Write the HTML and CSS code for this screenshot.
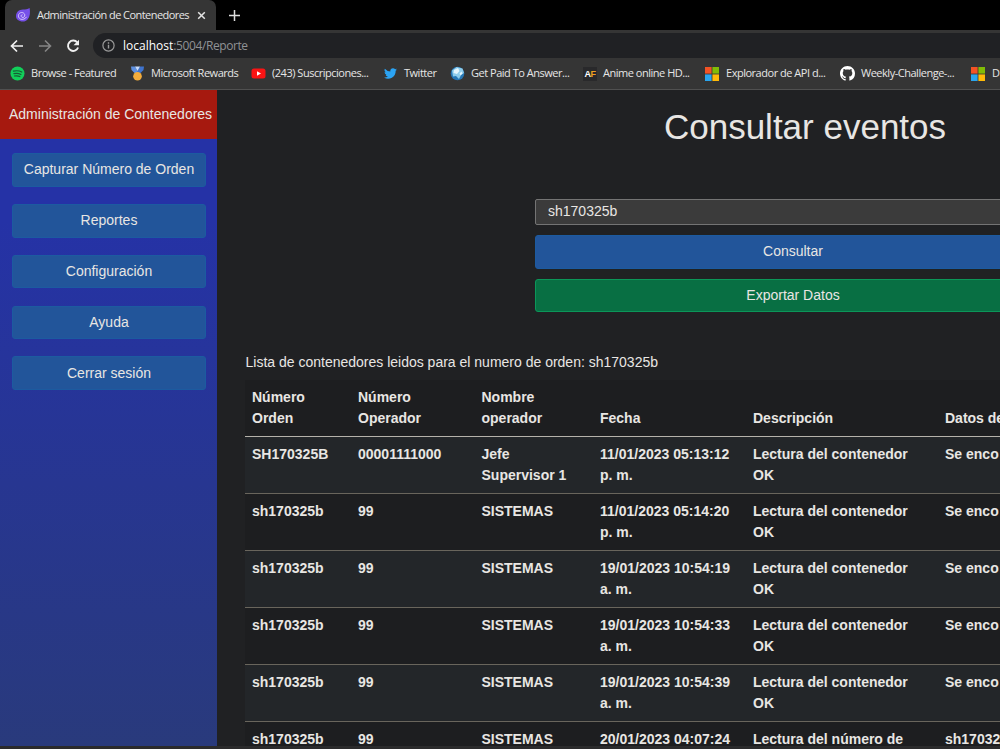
FILE: index.html
```html
<!DOCTYPE html>
<html lang="es">
<head>
    <meta charset="UTF-8">
    <meta name="viewport" content="width=device-width, initial-scale=1.0">
    <title>Administración de Contenedores</title>
    <link rel="stylesheet" href="styles.css">
</head>
<body>
    <div class="browser">
        <div class="tabs">
            <div class="tab">
                <svg class="tab__icon" width="16" height="16" viewBox="0 0 16 16">
                    <path d="M1 9.500C1 5 4 2.800 8 2.600c2.600 0 4.500-.6 6.600-1.700C15.400 5 15 9.500 12.800 12.200 10.800 14.700 7.500 15 5 14 2.500 13.200 1 11.700 1 9.500z" fill="#7650e8"/>
                    <path d="M11.500 9.800c-1 2.200-4 3.200-6.100 2.200C3 10.600 2.800 7.600 4.700 6.200 6.600 4.800 9.500 5.700 9.800 8c.2 2-1.700 3-3 2.200-1.300-.9-.6-2.600.7-2.400" fill="none" stroke="#d9c9ff" stroke-width="1"/>
                </svg>
                <span class="tab__title">Administración de Contenedores</span>
                <svg class="tab__close" width="9" height="9" viewBox="0 0 9 9"><path d="M1.200 1.200l6.600 6.600M7.800 1.200L1.200 7.800" stroke="#e4e4e4" stroke-width="1.500"/></svg>
            </div>
            <svg class="tabs__new" width="11" height="11" viewBox="0 0 11 11"><path d="M5.500 0v11M0 5.500h11" stroke="#dedede" stroke-width="1.500"/></svg>
        </div>

        <div class="toolbar">
            <svg width="14" height="14" viewBox="0 0 14 14"><path d="M13 7H2M7 1.500L1.500 7 7 12.500" fill="none" stroke="#f0f0f0" stroke-width="1.700"/></svg>
            <svg width="14" height="14" viewBox="0 0 14 14"><path d="M1 7h11M7 1.500L12.500 7 7 12.500" fill="none" stroke="#858585" stroke-width="1.600"/></svg>
            <svg width="14" height="14" viewBox="0 0 14 14"><path d="M11.300 3.500A5.200 5.200 0 1 0 12.100 8.500" fill="none" stroke="#f0f0f0" stroke-width="1.900"/><path d="M13 .8v5.500H7.500z" fill="#f0f0f0"/></svg>
            <div class="address">
                <svg width="13" height="13" viewBox="0 0 13 13"><circle cx="6.500" cy="6.500" r="5.600" fill="none" stroke="#9a9a9a" stroke-width="1.200"/><path d="M6.500 5.800v3.700M6.500 3.300v1.400" stroke="#9a9a9a" stroke-width="1.400"/></svg>
                <span class="address__url"><b>localhost</b>:5004/Reporte</span>
            </div>
        </div>

        <div class="bookmarks">
            <div class="bookmark bookmark--spotify">
                <svg width="15" height="15" viewBox="0 0 15 15"><circle cx="7.500" cy="7.500" r="7" fill="#12cf5a"/><path d="M3.400 5.200c3-.8 6-.5 8.400.8M3.900 7.700c2.500-.6 4.900-.4 7 .8M4.400 10c2-.4 3.800-.3 5.400.6" fill="none" stroke="#175c35" stroke-width="1.200" stroke-linecap="round"/></svg>
                <span>Browse - Featured</span>
            </div>
            <div class="bookmark bookmark--rewards">
                <svg width="15" height="15" viewBox="0 0 15 15"><path d="M1 .5h4l3.500 6-3 1.500L1.500 4z" fill="#5d8fe0"/><path d="M14 .5h-4L6.500 6.500l3 1.500 4-4z" fill="#3f74cf"/><path d="M5 .5h5L7.500 5z" fill="#c6dcff"/><circle cx="7.500" cy="10.200" r="4.300" fill="#f3ac3c"/></svg>
                <span>Microsoft Rewards</span>
            </div>
            <div class="bookmark bookmark--youtube">
                <svg width="15" height="15" viewBox="0 0 15 15"><rect x=".5" y="2.500" width="14" height="10" rx="2.500" fill="#fa1414"/><path d="M6 5.300v4.400l4-2.200z" fill="#fff"/></svg>
                <span>(243) Suscripciones...</span>
            </div>
            <div class="bookmark bookmark--twitter">
                <svg width="13" height="13" viewBox="0 0 24 24"><path d="M23.900 4.600a10 10 0 0 1-2.800.8 5 5 0 0 0 2.200-2.700c-1 .6-2 1-3.100 1.200a4.900 4.900 0 0 0-8.400 4.500A14 14 0 0 1 1.700 3.200a4.900 4.900 0 0 0 1.500 6.500c-.8 0-1.600-.2-2.200-.6a4.900 4.900 0 0 0 3.900 4.900c-.7.200-1.500.2-2.200.1a4.900 4.900 0 0 0 4.600 3.400A9.900 9.900 0 0 1 0 19.500a14 14 0 0 0 21.500-12.400c1-.7 1.800-1.600 2.400-2.500z" fill="#2ba3f3"/></svg>
                <span>Twitter</span>
            </div>
            <div class="bookmark bookmark--answer">
                <svg width="15" height="15" viewBox="0 0 15 15"><circle cx="7.500" cy="7.500" r="6.800" fill="#2777b5"/><path d="M2 4.500L6.500 1l6 1.500L14 7l-3 2-2 4-3-3-3 .5z" fill="#8ecdec"/><path d="M4 4l4-2 1.500 3L7 8 3.500 7zM9.500 7.500l2-2 1 2-2 2z" fill="#e4f5fc"/></svg>
                <span>Get Paid To Answer...</span>
            </div>
            <div class="bookmark bookmark--anime">
                <div class="af">A<i>F</i></div>
                <span>Anime online HD...</span>
            </div>
            <div class="bookmark bookmark--api">
                <svg width="14" height="14" viewBox="0 0 14 14"><path d="M0 0h6.600v6.600H0z" fill="#f35325"/><path d="M7.400 0H14v6.600H7.400z" fill="#81bc06"/><path d="M0 7.400h6.600V14H0z" fill="#2aa5ee"/><path d="M7.400 7.400H14V14H7.400z" fill="#ffba08"/></svg>
                <span>Explorador de API d...</span>
            </div>
            <div class="bookmark bookmark--github">
                <svg width="15" height="15" viewBox="0 0 16 16"><path fill="#fff" d="M8 0C3.580 0 0 3.580 0 8c0 3.540 2.290 6.530 5.470 7.590.4.070.55-.17.55-.38 0-.19-.01-.82-.01-1.490-2.010.37-2.530-.49-2.690-.94-.09-.23-.48-.94-.82-1.130-.28-.15-.68-.52-.01-.53.63-.01 1.080.58 1.230.82.72 1.210 1.870.87 2.330.66.07-.52.28-.87.51-1.070-1.780-.2-3.640-.89-3.640-3.950 0-.87.31-1.590.82-2.150-.08-.2-.36-1.020.08-2.120 0 0 .67-.21 2.200.82.64-.18 1.320-.27 2-.27s1.360.09 2 .27c1.530-1.040 2.200-.82 2.200-.82.44 1.100.16 1.920.08 2.120.51.560.82 1.270.82 2.150 0 3.070-1.870 3.750-3.650 3.950.29.25.54.73.54 1.480 0 1.070-.01 1.930-.01 2.200 0 .21.15.46.55.38A8.010 8.010 0 0 0 16 8c0-4.420-3.580-8-8-8z"/></svg>
                <span>Weekly-Challenge-...</span>
            </div>
            <div class="bookmark bookmark--docs">
                <svg width="14" height="14" viewBox="0 0 14 14"><path d="M0 0h6.600v6.600H0z" fill="#f35325"/><path d="M7.400 0H14v6.600H7.400z" fill="#81bc06"/><path d="M0 7.400h6.600V14H0z" fill="#2aa5ee"/><path d="M7.400 7.400H14V14H7.400z" fill="#ffba08"/></svg>
                <span>D</span>
            </div>
        </div>
    </div>

    <div class="page">
        <nav class="sidebar">
            <div class="sidebar__brand">Administración de Contenedores</div>
            <div class="sidebar__menu">
                <button class="btn btn--menu">Capturar Número de Orden</button>
                <button class="btn btn--menu">Reportes</button>
                <button class="btn btn--menu">Configuración</button>
                <button class="btn btn--menu">Ayuda</button>
                <button class="btn btn--menu">Cerrar sesión</button>
            </div>
        </nav>

        <main class="content">
            <h1>Consultar eventos</h1>
            <div class="form">
                <input class="form__input" type="text" value="sh170325b">
                <button class="btn btn--primary">Consultar</button>
                <button class="btn btn--success">Exportar Datos</button>
            </div>

            <p class="list-title">Lista de contenedores leidos para el numero de orden: sh170325b</p>
            <table class="table">
                <colgroup>
                    <col class="col-orden">
                    <col class="col-operador">
                    <col class="col-nombre">
                    <col class="col-fecha">
                    <col class="col-desc">
                    <col class="col-datos">
                </colgroup>
                <thead>
                    <tr><th>Número<br>Orden</th><th>Número<br>Operador</th><th>Nombre<br>operador</th><th>Fecha</th><th>Descripción</th><th>Datos de</th></tr>
                </thead>
                <tbody>
                    <tr><td>SH170325B</td><td>00001111000</td><td>Jefe<br>Supervisor 1</td><td>11/01/2023 05:13:12<br>p. m.</td><td>Lectura del contenedor<br>OK</td><td>Se enco</td></tr>
                    <tr><td>sh170325b</td><td>99</td><td>SISTEMAS</td><td>11/01/2023 05:14:20<br>p. m.</td><td>Lectura del contenedor<br>OK</td><td>Se enco</td></tr>
                    <tr><td>sh170325b</td><td>99</td><td>SISTEMAS</td><td>19/01/2023 10:54:19<br>a. m.</td><td>Lectura del contenedor<br>OK</td><td>Se enco</td></tr>
                    <tr><td>sh170325b</td><td>99</td><td>SISTEMAS</td><td>19/01/2023 10:54:33<br>a. m.</td><td>Lectura del contenedor<br>OK</td><td>Se enco</td></tr>
                    <tr><td>sh170325b</td><td>99</td><td>SISTEMAS</td><td>19/01/2023 10:54:39<br>a. m.</td><td>Lectura del contenedor<br>OK</td><td>Se enco</td></tr>
                    <tr><td>sh170325b</td><td>99</td><td>SISTEMAS</td><td>20/01/2023 04:07:24</td><td>Lectura del número de</td><td>sh17032</td></tr>
                </tbody>
            </table>
        </main>
    </div>
</body>
</html>
```
FILE: styles.css
```css
* {
    box-sizing: border-box;
}

body {
    margin: 0;
    height: 749px;
    overflow: hidden;
    display: flex;
    flex-direction: column;
    background-color: #202123;
    color: #e8e6e3;
    font-family: "Liberation Sans", Arial, sans-serif;
    font-size: 14px;
    line-height: 21px;
}

svg {
    display: block;
    flex: none;
}

/* barra del navegador */
.browser {
    flex: none;
    height: 90px;
    background-color: #353535;
    border-bottom: 1px solid #505050;
    font-family: "Open Sans", "Noto Sans", sans-serif;
    font-size: 11px;
    color: #e6e6e6;
    white-space: nowrap;
    overflow: hidden;
}

.tabs {
    display: flex;
    align-items: center;
    height: 30px;
    padding-left: 5px;
    background-color: #000;
}

.tab {
    display: flex;
    align-items: center;
    width: 211px;
    height: 30px;
    padding: 0 10px;
    background-color: #353535;
    border-radius: 7px 7px 0 0;
}

.tab__title {
    width: 153px;
    margin: 0 7px 0 6px;
    padding-bottom: 2px;
    letter-spacing: -0.55px;
}

.tabs__new {
    margin-left: 13px;
}

.toolbar {
    display: flex;
    align-items: center;
    gap: 14px;
    height: 31px;
    padding-left: 10px;
}

.address {
    flex: 1;
    display: flex;
    align-items: center;
    gap: 8px;
    height: 25px;
    margin-left: -1px;
    padding-left: 9px;
    border-radius: 13px 0 0 13px;
    background-color: #202124;
}

.address__url {
    font-size: 12px;
    letter-spacing: -0.4px;
    color: #909295;
}

.address__url b {
    font-weight: normal;
    letter-spacing: 0;
    color: #fff;
}

.bookmarks {
    display: flex;
    align-items: center;
    height: 25px;
    padding-left: 10px;
    letter-spacing: -0.48px;
}

.bookmark {
    display: flex;
    flex: none;
    align-items: center;
    gap: 6px;
}

.bookmark span {
    padding-bottom: 2px;
}

.bookmark--spotify {
    width: 120px;
}

.bookmark--rewards {
    width: 121px;
}

.bookmark--youtube {
    width: 133px;
}

.bookmark--twitter {
    width: 66px;
    gap: 7px;
}

.bookmark--answer {
    width: 133px;
}

.bookmark--anime {
    width: 122px;
}

.bookmark--api {
    width: 135px;
    gap: 7px;
}

.bookmark--github {
    width: 131px;
}

.bookmark--docs {
    gap: 7px;
}

.af {
    width: 14px;
    height: 14px;
    background-color: #29292b;
    color: #fff;
    font: bold 9px/14px "Liberation Sans", Arial, sans-serif;
    letter-spacing: -0.5px;
    text-align: center;
}

.af i {
    color: #f0a020;
    font-style: normal;
}

/* contenido */
.page {
    flex: 1;
    display: flex;
    min-height: 0;
    overflow: hidden;
    border-bottom: 3px solid #2b2b2c;
}

.sidebar {
    flex: none;
    width: 217px;
    background: linear-gradient(180deg, #2532a6 0%, #2532a6 20%, #293a7c 100%);
}

.sidebar__brand {
    height: 49px;
    padding-left: 9px;
    background-color: #a6190f;
    line-height: 49px;
    white-space: nowrap;
}

.sidebar__menu {
    display: flex;
    flex-direction: column;
    gap: 17.2px;
    padding: 14.2px 11px 0 12px;
}

.btn {
    display: block;
    width: 100%;
    height: 33.6px;
    padding: 0;
    border: 1px solid transparent;
    border-radius: 3px;
    color: #e8e6e3;
    font-family: inherit;
    font-size: 14px;
    line-height: 21px;
}

.btn--menu {
    background-color: #22559a;
    border-color: #1c5ba0;
}

.btn--primary {
    background-color: #22559a;
    border-color: #1c5ba0;
}

.btn--success {
    background-color: #086f43;
    border-color: #0b9659;
}

.form .btn {
    padding-bottom: 0.6px;
}

.content {
    flex: none;
    width: 1176px;
    padding: 16px 28px 0;
}

h1 {
    margin: 0;
    font-size: 35px;
    font-weight: normal;
    line-height: 42px;
    text-align: center;
}

.form {
    display: flex;
    flex-direction: column;
    gap: 10px;
    width: 516px;
    margin: 51px 0 0 290px;
}

.form__input {
    height: 26px;
    padding: 0 12px 2px;
    border: 1px solid #747474;
    border-radius: 2px;
    background-color: #3b3b3b;
    color: #e8e6e3;
    font-family: inherit;
    font-size: 14px;
}

.list-title {
    margin: 39.8px 0 7px;
    padding-left: 0.5px;
}

.table {
    width: 1120px;
    table-layout: fixed;
    border-collapse: collapse;
    background-color: #1d1e20;
    font-weight: bold;
    white-space: nowrap;
}

.table th,
.table td {
    height: 57px;
    padding: 7px;
    border-bottom: 1px solid #69655c;
    text-align: left;
    vertical-align: top;
}

.table th {
    vertical-align: bottom;
    border-bottom-color: #b5b2aa;
}

.table tbody tr:nth-child(odd) {
    background-color: #232629;
}

.col-orden {
    width: 106px;
}

.col-operador {
    width: 123.5px;
}

.col-nombre {
    width: 118.5px;
}

.col-fecha {
    width: 153px;
}

.col-desc {
    width: 192px;
}
```
